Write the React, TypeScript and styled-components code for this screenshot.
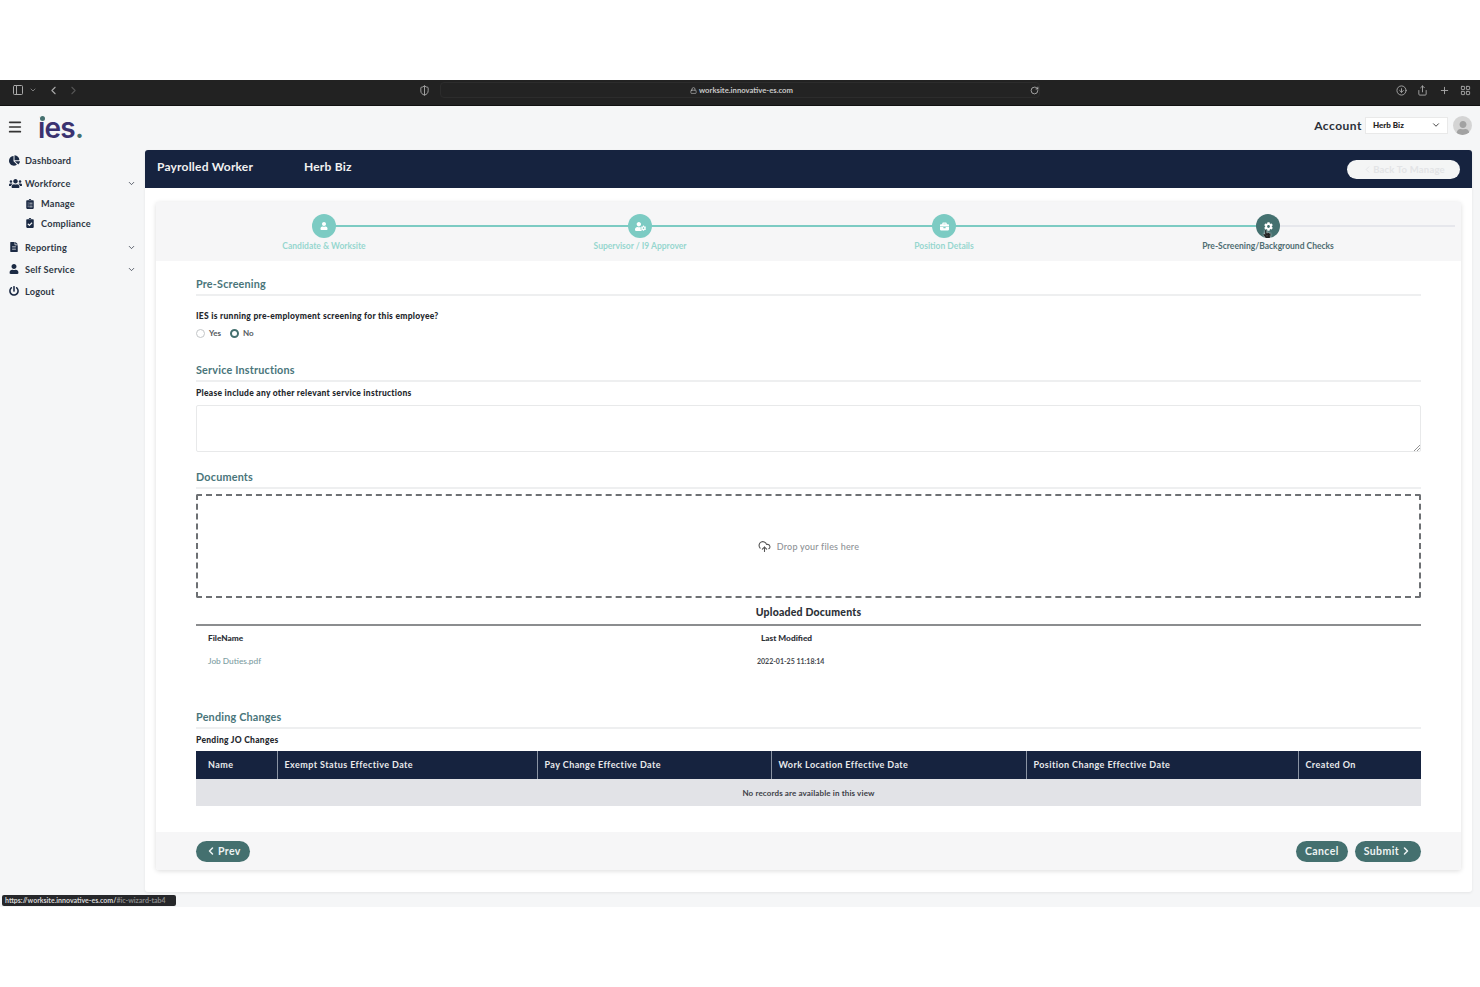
import React from 'react';
import styled, { createGlobalStyle } from 'styled-components';
import {
  ChevronDown, ChevronLeft, ChevronRight, CloudUpload, Menu, RotateCw, Share, Plus, LayoutGrid,
  PanelLeft, ArrowDownCircle, Lock, ShieldHalf,
} from 'lucide-react';
import {
  FaChartPie, FaUsers, FaClipboardList, FaClipboardCheck, FaFileAlt, FaUser, FaPowerOff,
  FaUserCog, FaBriefcase, FaCog, FaHandPointer,
} from 'react-icons/fa';

const GlobalStyle = createGlobalStyle`
  html, body {
    margin: 0;
    padding: 0;
    background: #fff;
  }
  body {
    font-family: "Lato", "Open Sans", sans-serif;
    color: #222;
  }
  * { box-sizing: border-box; }
`;

const NAVY = '#16233f';
const TEAL = '#44706f';
const LIGHT_TEAL = '#7ccbc3';

const Screen = styled.div`
  position: relative;
  width: 1480px;
  height: 987px;
  padding-top: 80px;
  background: #fff;
  overflow: hidden;
`;

/* browser chrome */
const BrowserBar = styled.div`
  height: 26px;
  background: #222222;
  border-bottom: 1px solid #111;
  display: flex;
  align-items: center;
  padding: 0 9px 5px 12px;
  color: #a9a9a9;
`;

const BarGroup = styled.div`
  display: flex;
  align-items: center;
  gap: 10px;
  width: 407px;

  svg:nth-child(2) { margin-left: -5px; }
  svg:nth-child(4) { margin-left: -3px; color: #555; }
`;

const AddressBar = styled.div`
  width: 600px;
  height: 16px;
  margin-left: 10px;
  border-radius: 4px;
  border: 1px solid #2c2c2c;
  background: #232323;
  display: flex;
  align-items: center;
  padding: 0 0 0 249px;
  font-size: 7.7px;
  font-weight: 700;
  color: #c8c8c8;
  gap: 2px;
`;

const AddressText = styled.span`
  flex: 1;
`;

const BarActions = styled.div`
  margin-left: auto;
  display: flex;
  align-items: center;
  gap: 10.5px;
`;

/* app shell */
const AppShell = styled.div`
  height: 801px;
  background: #f5f6f7;
  display: grid;
  grid-template-columns: 145px 1fr;
  grid-template-rows: 44px 1fr;
`;

const LogoCell = styled.div`
  display: flex;
  align-items: center;
  padding-left: 7px;
  gap: 15px;
  color: #333;

  svg { margin-top: -2px; }
`;

const Logo = styled.div`
  position: relative;
  font-family: "Inter", "Liberation Sans", sans-serif;
  font-size: 28px;
  font-weight: 600;
  letter-spacing: -0.8px;
  color: #3a3270;
  line-height: 1;
  margin-top: -1px;

  &::before {
    content: '';
    position: absolute;
    left: 1.5px;
    top: 2.5px;
    width: 5px;
    height: 5px;
    border-radius: 50%;
    background: ${TEAL};
    box-shadow: 0 0 0 1px #f5f6f7;
  }
`;

const LogoDot = styled.span`
  color: ${TEAL};
`;

const AccountBar = styled.div`
  display: flex;
  align-items: center;
  justify-content: flex-end;
  padding-right: 8px;
  margin-top: -6px;
`;

const AccountLabel = styled.span`
  font-size: 12px;
  font-weight: 700;
  letter-spacing: 0.5px;
  color: #2b2f38;
  margin-right: 3px;
`;

const AccountSelect = styled.div`
  width: 83px;
  height: 17px;
  background: #fff;
  border: 1px solid #e9e9e9;
  font-size: 8px;
  font-weight: 900;
  display: flex;
  align-items: center;
  justify-content: space-between;
  padding: 0 6px 0 7px;
  margin-right: 5px;
`;

const Avatar = styled.div`
  width: 19px;
  height: 19px;
  border-radius: 50%;
  background: #d4d4d4;
  color: #a2a2a2;
  display: flex;
  align-items: flex-end;
  justify-content: center;
  overflow: hidden;
`;

const Sidebar = styled.nav`
  padding: 0 9px;
  margin-top: -1px;
  display: flex;
  flex-direction: column;
`;

const NavItem = styled.div<{ $height: number }>`
  height: ${(p) => p.$height}px;
  display: flex;
  align-items: center;
  color: #2e3644;
  font-size: 9.2px;
  font-weight: 700;
  letter-spacing: 0.2px;
`;

const SubItem = styled(NavItem)`
  padding-left: 16px;
`;

const NavIcon = styled.span`
  width: 16px;
  display: flex;
  align-items: center;
  color: #1b2a44;
`;

const NavLabel = styled.span`
  flex: 1;
`;

const MainPanel = styled.main`
  width: 1327px;
  height: 742px;
  background: #fff;
  border-radius: 3px;
  box-shadow: 0 1px 3px rgba(0, 0, 0, 0.07);
  display: flex;
  flex-direction: column;
`;

const PanelHeader = styled.header`
  height: 38px;
  flex-shrink: 0;
  background: ${NAVY};
  border-radius: 3px 3px 0 0;
  display: flex;
  align-items: center;
  padding: 0 12px;
  color: #f1f1f1;
  font-size: 12px;
  font-weight: 700;
  letter-spacing: 0.2px;
`;

const PanelTitle = styled.span`
  width: 147px;
  margin-top: -6px;
`;

const BackButton = styled.div`
  margin-left: auto;
  width: 113px;
  height: 19px;
  margin-right: 0;
  border-radius: 10px;
  background: #f4f5f5;
  color: #e3e4e6;
  font-size: 9.5px;
  display: flex;
  align-items: center;
  justify-content: center;
`;

const Card = styled.div`
  margin: 14px 11px 0;
  height: 668px;
  border-radius: 3px;
  box-shadow: 0 1px 5px rgba(0, 0, 0, 0.14);
  display: flex;
  flex-direction: column;
  background: #fff;
`;

/* wizard steps */
const Stepper = styled.div`
  height: 59px;
  flex-shrink: 0;
  background: #f6f6f7;
  padding: 12px 12px 0;
  display: grid;
  grid-template-columns: 312px 320px 288px 360px;
`;

const Step = styled.div`
  display: flex;
  flex-direction: column;
  align-items: center;
  position: relative;
`;

const StepLine = styled.span<{ $side: 'left' | 'right'; $done: boolean; $extra?: number }>`
  position: absolute;
  top: 11px;
  height: 2px;
  left: ${(p) => (p.$side === 'left' ? '0' : '50%')};
  right: ${(p) => (p.$side === 'left' ? '50%' : `${-(p.$extra || 0)}px`)};
  background: ${(p) => (p.$done ? LIGHT_TEAL : '#e6e7ec')};
`;

const StepDot = styled.div<{ $active?: boolean }>`
  position: relative;
  width: 24px;
  height: 24px;
  border-radius: 50%;
  background: ${(p) => (p.$active ? TEAL : LIGHT_TEAL)};
  color: #fff;
  display: flex;
  align-items: center;
  justify-content: center;
`;

const StepLabel = styled.div<{ $active?: boolean }>`
  margin-top: 1px;
  font-size: 8.5px;
  font-weight: 700;
  line-height: 14px;
  color: ${(p) => (p.$active ? '#4f6d72' : '#96d6cf')};
`;

const Pointer = styled.span`
  position: absolute;
  left: 7px;
  top: 16px;
  color: #222;
  display: flex;
  filter: drop-shadow(0 0 1px #fff);
`;

/* form */
const CardBody = styled.div`
  flex: 1;
  padding: 15px 40px 0 40px;
`;

const SectionTitle = styled.div<{ $top?: number }>`
  margin-top: ${(p) => p.$top || 0}px;
  height: 20px;
  line-height: 16px;
  font-size: 10.8px;
  font-weight: 700;
  letter-spacing: 0.2px;
  color: #49757a;
  border-bottom: 2px solid #eeeff0;
`;

const FieldLabel = styled.div<{ $top: number }>`
  margin-top: ${(p) => p.$top}px;
  font-size: 8.5px;
  font-weight: 900;
  line-height: 12px;
  letter-spacing: 0.27px;
  color: #24272c;
`;

const RadioRow = styled.div`
  display: flex;
  align-items: center;
  margin-top: 5px;
  height: 12px;
`;

const Radio = styled.span<{ $checked?: boolean }>`
  width: 9px;
  height: 9px;
  border-radius: 50%;
  background: #fff;
  border: ${(p) => (p.$checked ? `2.5px solid ${TEAL}` : '1px solid #c3c6c8')};
  margin-right: 4px;
`;

const RadioLabel = styled.span`
  font-size: 8px;
  font-weight: 700;
  color: #555a60;
  margin-right: 9px;
`;

const TextBox = styled.div`
  position: relative;
  margin-top: 6px;
  height: 47px;
  border: 1px solid #e8e9ea;
  border-radius: 2px;
`;

const ResizeGrip = styled.svg`
  position: absolute;
  right: 0;
  bottom: 0;
`;

const DropZone = styled.div`
  margin-top: 5px;
  height: 104px;
  border: 2px dashed #6d7073;
  border-radius: 2px;
  display: flex;
  align-items: center;
  justify-content: center;
  gap: 6px;
  font-size: 9px;
  font-weight: 500;
  letter-spacing: 0.2px;
  color: #8e9296;
`;

const UploadedTitle = styled.div`
  height: 28px;
  line-height: 28px;
  text-align: center;
  font-size: 10.5px;
  font-weight: 900;
  letter-spacing: 0.2px;
  color: #2c3036;
  border-bottom: 2px solid #8b8d8f;
`;

const FileGrid = styled.div`
  display: grid;
  grid-template-columns: 549px 1fr;
  padding-left: 12px;
  font-size: 8.3px;
`;

const FileHead = styled.div<{ $indent?: number }>`
  height: 24px;
  line-height: 24px;
  padding-left: ${(p) => p.$indent || 0}px;
  font-weight: 900;
  color: #2c3036;
`;

const FileCell = styled.div<{ $date?: boolean }>`
  height: 22px;
  line-height: 22px;
  font-size: ${(p) => (p.$date ? '7px' : 'inherit')};
  font-weight: ${(p) => (p.$date ? 700 : 500)};
  color: ${(p) => (p.$date ? '#44484d' : '#7d9da2')};
`;

const ChangesTable = styled.table`
  margin-top: 5px;
  width: 100%;
  border-collapse: collapse;
  table-layout: fixed;
`;

const HeadCell = styled.th<{ $width: number; $pad: number }>`
  width: ${(p) => p.$width}px;
  height: 28px;
  padding: 0 0 1px ${(p) => p.$pad}px;
  background: ${NAVY};
  color: #e9eaec;
  text-align: left;
  font-size: 9px;
  font-weight: 700;
  letter-spacing: 0.42px;
  border-left: 1px solid #8a93a3;
  &:first-child { border-left: none; }
`;

const EmptyCell = styled.td`
  height: 27px;
  background: #e2e3e7;
  text-align: center;
  font-size: 8px;
  font-weight: 700;
  letter-spacing: 0.13px;
  color: #3d4147;
`;

/* footer */
const CardFooter = styled.div`
  height: 38px;
  flex-shrink: 0;
  background: #f6f6f7;
  border-radius: 0 0 3px 3px;
  padding: 0 40px;
  display: flex;
  align-items: center;
  gap: 7px;
`;

const PillButton = styled.div`
  height: 21px;
  padding: 0 9px;
  border-radius: 11px;
  background: ${TEAL};
  color: #eef3f3;
  font-size: 10.5px;
  font-weight: 700;
  letter-spacing: 0.4px;
  display: flex;
  align-items: center;
  gap: 1px;
`;

const FooterSpacer = styled.div`
  flex: 1;
`;

const StatusTip = styled.div`
  position: absolute;
  left: 2px;
  top: 895px;
  width: 174px;
  height: 11px;
  border-radius: 2px;
  background: #26272a;
  color: #d8d8d8;
  font-size: 7px;
  font-weight: 700;
  line-height: 11px;
  padding-left: 3px;
  white-space: nowrap;
`;

const StatusDim = styled.span`
  color: #8a8a8a;
`;

const steps = [
  { label: 'Candidate & Worksite', icon: <FaUser size={8} /> },
  { label: 'Supervisor / I9 Approver', icon: <FaUserCog size={11} /> },
  { label: 'Position Details', icon: <FaBriefcase size={9} /> },
  { label: 'Pre-Screening/Background Checks', icon: <FaCog size={9} />, active: true },
];

const columns = [
  { name: 'Name', width: 81, pad: 12 },
  { name: 'Exempt Status Effective Date', width: 260, pad: 7 },
  { name: 'Pay Change Effective Date', width: 234, pad: 7 },
  { name: 'Work Location Effective Date', width: 255, pad: 7 },
  { name: 'Position Change Effective Date', width: 272, pad: 7 },
  { name: 'Created On', width: 123, pad: 7 },
];

export default function App() {
  return (
    <Screen>
      <GlobalStyle />
      <BrowserBar>
        <BarGroup>
          <PanelLeft size={12} />
          <ChevronDown size={8} />
          <ChevronLeft size={13} />
          <ChevronRight size={13} />
        </BarGroup>
        <ShieldHalf size={11} />
        <AddressBar>
          <Lock size={7} />
          <AddressText>worksite.innovative-es.com</AddressText>
          <RotateCw size={9} />
        </AddressBar>
        <BarActions>
          <ArrowDownCircle size={11} />
          <Share size={11} />
          <Plus size={11} />
          <LayoutGrid size={11} />
        </BarActions>
      </BrowserBar>
      <AppShell>
        <LogoCell>
          <Menu size={16} strokeWidth={2.5} />
          <Logo>ies<LogoDot>.</LogoDot></Logo>
        </LogoCell>
        <AccountBar>
          <AccountLabel>Account</AccountLabel>
          <AccountSelect>
            Herb Biz
            <ChevronDown size={10} />
          </AccountSelect>
          <Avatar><FaUser size={14} /></Avatar>
        </AccountBar>
        <Sidebar>
          <NavItem $height={22}>
            <NavIcon><FaChartPie size={11} /></NavIcon>
            <NavLabel>Dashboard</NavLabel>
          </NavItem>
          <NavItem $height={24}>
            <NavIcon><FaUsers size={13} /></NavIcon>
            <NavLabel>Workforce</NavLabel>
            <ChevronDown size={9} />
          </NavItem>
          <SubItem $height={17}>
            <NavIcon><FaClipboardList size={10} /></NavIcon>
            <NavLabel>Manage</NavLabel>
          </SubItem>
          <SubItem $height={22}>
            <NavIcon><FaClipboardCheck size={10} /></NavIcon>
            <NavLabel>Compliance</NavLabel>
          </SubItem>
          <NavItem $height={26}>
            <NavIcon><FaFileAlt size={10} /></NavIcon>
            <NavLabel>Reporting</NavLabel>
            <ChevronDown size={9} />
          </NavItem>
          <NavItem $height={18}>
            <NavIcon><FaUser size={10} /></NavIcon>
            <NavLabel>Self Service</NavLabel>
            <ChevronDown size={9} />
          </NavItem>
          <NavItem $height={26}>
            <NavIcon><FaPowerOff size={10} /></NavIcon>
            <NavLabel>Logout</NavLabel>
          </NavItem>
        </Sidebar>
        <MainPanel>
          <PanelHeader>
            <PanelTitle>Payrolled Worker</PanelTitle>
            <PanelTitle>Herb Biz</PanelTitle>
            <BackButton><ChevronLeft size={11} />Back To Manage</BackButton>
          </PanelHeader>
          <Card>
            <Stepper>
              {steps.map((step, i) => (
                <Step key={step.label}>
                  {i > 0 && <StepLine $side="left" $done />}
                  <StepLine $side="right" $done={i < steps.length - 1} $extra={i === steps.length - 1 ? 7 : 0} />
                  <StepDot $active={step.active}>
                    {step.icon}
                    {step.active && <Pointer><FaHandPointer size={8} /></Pointer>}
                  </StepDot>
                  <StepLabel $active={step.active}>{step.label}</StepLabel>
                </Step>
              ))}
            </Stepper>
            <CardBody>
              <SectionTitle>Pre-Screening</SectionTitle>
              <FieldLabel $top={14}>IES is running pre-employment screening for this employee?</FieldLabel>
              <RadioRow>
                <Radio />
                <RadioLabel>Yes</RadioLabel>
                <Radio $checked />
                <RadioLabel>No</RadioLabel>
              </RadioRow>
              <SectionTitle $top={23}>Service Instructions</SectionTitle>
              <FieldLabel $top={5}>Please include any other relevant service instructions</FieldLabel>
              <TextBox>
                <ResizeGrip width="6" height="6" viewBox="0 0 6 6">
                  <path d="M0 6 L6 0 M3 6 L6 3" stroke="#777" strokeWidth="0.8" />
                </ResizeGrip>
              </TextBox>
              <SectionTitle $top={17}>Documents</SectionTitle>
              <DropZone>
                <CloudUpload size={13} color="#555" />
                Drop your files here
              </DropZone>
              <UploadedTitle>Uploaded Documents</UploadedTitle>
              <FileGrid>
                <FileHead>FileName</FileHead>
                <FileHead $indent={4}>Last Modified</FileHead>
                <FileCell>Job Duties.pdf</FileCell>
                <FileCell $date>2022-01-25 11:18:14</FileCell>
              </FileGrid>
              <SectionTitle $top={37}>Pending Changes</SectionTitle>
              <FieldLabel $top={5}>Pending JO Changes</FieldLabel>
              <ChangesTable>
                <thead>
                  <tr>
                    {columns.map((col) => (
                      <HeadCell key={col.name} $width={col.width} $pad={col.pad}>{col.name}</HeadCell>
                    ))}
                  </tr>
                </thead>
                <tbody>
                  <tr>
                    <EmptyCell colSpan={columns.length}>No records are available in this view</EmptyCell>
                  </tr>
                </tbody>
              </ChangesTable>
            </CardBody>
            <CardFooter>
              <PillButton><ChevronLeft size={12} strokeWidth={3} />Prev</PillButton>
              <FooterSpacer />
              <PillButton>Cancel</PillButton>
              <PillButton>Submit<ChevronRight size={12} strokeWidth={3} /></PillButton>
            </CardFooter>
          </Card>
        </MainPanel>
      </AppShell>
      <StatusTip>https://worksite.innovative-es.com/<StatusDim>#ic-wizard-tab4</StatusDim></StatusTip>
    </Screen>
  );
}
